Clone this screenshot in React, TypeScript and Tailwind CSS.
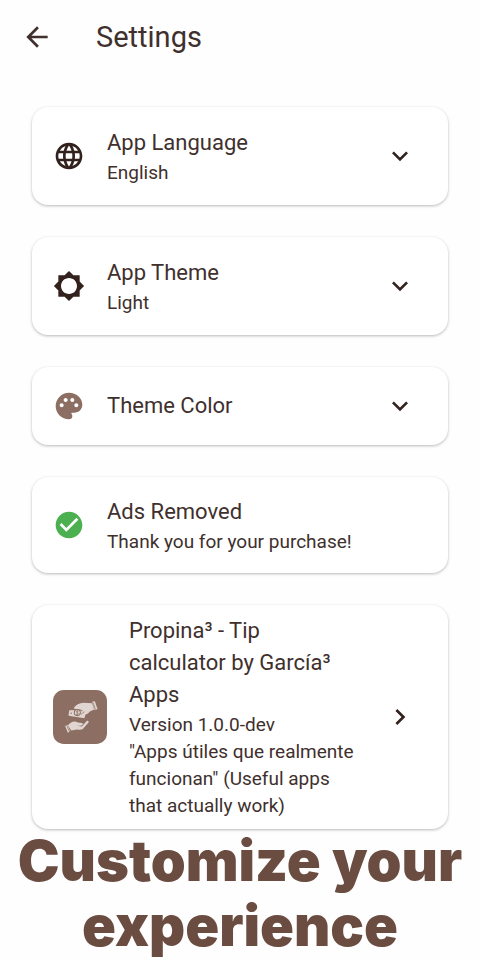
import { ReactNode } from "react";
import {
    MdArrowBack,
    MdBrightness5,
    MdCheckCircle,
    MdChevronRight,
    MdExpandMore,
    MdLanguage,
    MdPalette,
} from "react-icons/md";

type RowProps = {
    icon: ReactNode;
    title: string;
    lines?: string[];
    trailing?: ReactNode;
    size: string;
};

const card =
    "flex w-full items-center rounded-2xl bg-white py-2.5 pl-[21px] pr-8 text-left shadow-[0_1px_3px_rgba(0,0,0,0.28)]";

function RowContent({ icon, title, lines = [], trailing }: RowProps) {
    return (
        <>
            <span className="shrink-0">{icon}</span>
            <span className="ml-[22px] min-w-0 flex-1 pr-6">
                <span className="block text-[22px] leading-8">{title}</span>
                {lines.map((line) => (
                    <span key={line} className="block text-[19px] leading-[27px]">
                        {line}
                    </span>
                ))}
            </span>
            {trailing}
        </>
    );
}

function SettingButton(props: RowProps) {
    return (
        <button type="button" className={`${card} ${props.size}`}>
            <RowContent {...props} />
        </button>
    );
}

function AppLogo() {
    return (
        <svg viewBox="0 0 160 160" className="size-[54px]" aria-hidden="true">
            <rect width="160" height="160" rx="32" fill="#8d6e63" />
            <g fill="#e0d5d0">
                <path d="M48 60 L76 59 L98 66 L93 84 L46 76 Z" />
                <path d="M61 54 C67 44 78 39 91 38 L116 39 L122 58 L109 64 C102 74 92 75 84 72 L91 64 L82 58 L70 58 Z" />
                <path d="M116 35 L124 33 L132 56 L124 60 Z" />
                <path d="M44 105 C53 94 64 91 73 96 L86 98 C91 100 88 106 81 106 L71 106 L85 108 L100 92 C105 89 108 94 104 98 L89 115 C85 118 80 118 71 117 L54 120 Z" />
                <path d="M36 107 L43 104 L51 122 L44 127 Z" />
            </g>
            <circle cx="72" cy="67" r="9" fill="#e0d5d0" stroke="#8d6e63" strokeWidth="3" />
            <path
                d="M76 63 C70 59 66 65 72 67 C78 69 74 75 68 71 M72 60 V74"
                fill="none"
                stroke="#8d6e63"
                strokeWidth="2"
            />
            <circle cx="54" cy="69" r="2" fill="#8d6e63" />
            <path d="M83 72 L93 65 M119 38 L126 58 M41 106 L49 124" stroke="#8d6e63" strokeWidth="2" />
        </svg>
    );
}

export default function App() {
    const expand = <MdExpandMore className="size-8 shrink-0 text-[#33211e]" />;

    return (
        <div className="min-h-screen bg-[#fefefe] font-['Roboto',sans-serif] text-[#40302d]">
            <header className="flex h-[74px] items-center px-[21px]">
                <button type="button" aria-label="Back">
                    <MdArrowBack className="size-8" />
                </button>
                <h1 className="ml-[43px] text-[29px] leading-9">Settings</h1>
            </header>
            <main className="flex flex-col gap-8 px-8 pt-[33px]">
                <SettingButton
                    icon={<MdLanguage className="size-8 text-[#33211e]" />}
                    title="App Language"
                    lines={["English"]}
                    trailing={expand}
                    size="min-h-[98px]"
                />
                <SettingButton
                    icon={<MdBrightness5 className="size-8 text-[#33211e]" />}
                    title="App Theme"
                    lines={["Light"]}
                    trailing={expand}
                    size="min-h-[98px]"
                />
                <SettingButton
                    icon={<MdPalette className="size-8 text-[#8d6e63]" />}
                    title="Theme Color"
                    trailing={expand}
                    size="min-h-[78px]"
                />
                <section className={`${card} min-h-24`}>
                    <RowContent
                        icon={<MdCheckCircle className="size-8 text-[#4caf50]" />}
                        title="Ads Removed"
                        lines={["Thank you for your purchase!"]}
                        size=""
                    />
                </section>
                <SettingButton
                    icon={<AppLogo />}
                    title="Propina³ - Tip calculator by García³ Apps"
                    lines={[
                        "Version 1.0.0-dev",
                        "\"Apps útiles que realmente funcionan\" (Useful apps that actually work)",
                    ]}
                    trailing={<MdChevronRight className="size-8 shrink-0 text-[#33211e]" />}
                    size="min-h-56"
                />
            </main>
            <h2 className="text-center font-['Inter',sans-serif] text-[56px] font-black leading-[65px] text-[#6b4c41]">
                Customize your experience
            </h2>
        </div>
    );
}
